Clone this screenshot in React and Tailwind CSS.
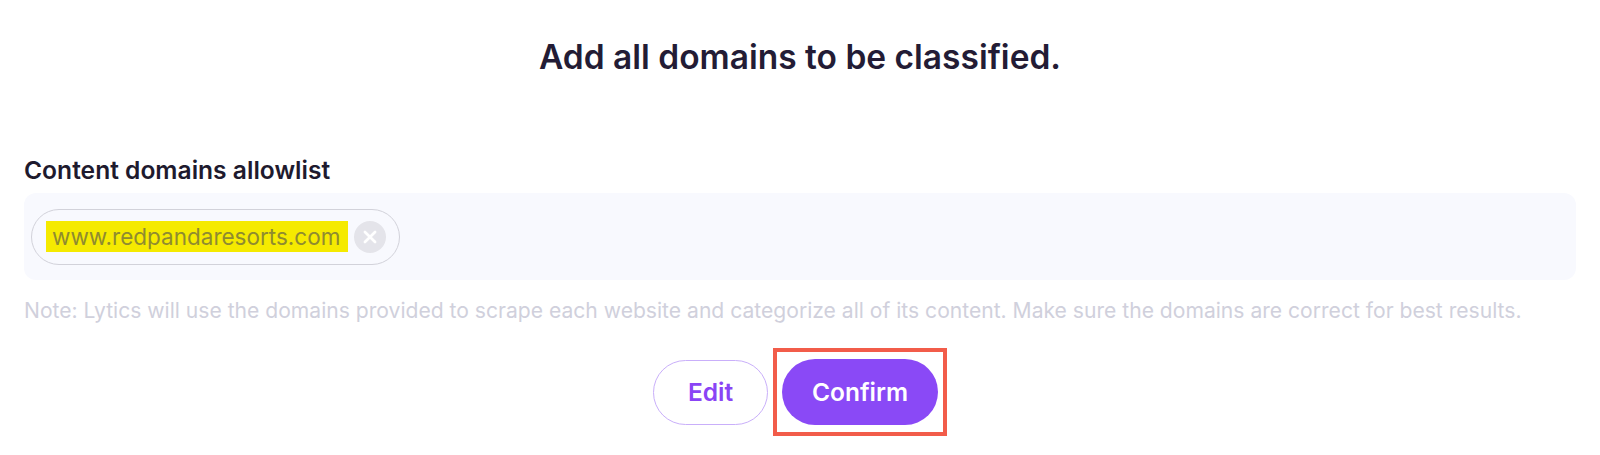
export default function App() {
  return (
    <div className="w-[1600px] h-[455px] bg-white font-['Inter',sans-serif] overflow-hidden">
      <div className="flex flex-col px-6">
        <h1 className="mt-[37px] text-center text-[33.5px] leading-[40px] font-semibold text-[#231c35]">
          Add all domains to be classified.
        </h1>
        <div className="mt-[78px] text-[24.6px] leading-[30px] font-semibold text-[#1e1a2e]">
          Content domains allowlist
        </div>
        <div className="mt-[8px] h-[87px] rounded-xl bg-[#f8f9fe] flex items-center px-[7px]">
          <div className="h-[56px] flex items-center gap-[6px] rounded-full border-[1.5px] border-[#d2d2da] pl-[14px] pr-[13px]">
            <span className="bg-[#f5ea00] pl-[6px] pr-[8px] h-[31px] flex items-center text-[22.5px] text-[#8f8b30]">
              www.redpandaresorts.com
            </span>
            <span className="w-[32px] h-[32px] rounded-full bg-[#e4e4ea] flex items-center justify-center">
              <svg width="18" height="18" viewBox="0 0 16 16" fill="none" stroke="white" strokeWidth="2.4" strokeLinecap="round">
                <path d="M3.5 3.5 L12.5 12.5 M12.5 3.5 L3.5 12.5" />
              </svg>
            </span>
          </div>
        </div>
        <p className="mt-[17px] text-[21.1px] leading-[28px] text-[#d0d0dc] whitespace-nowrap">
          Note: Lytics will use the domains provided to scrape each website and categorize all of its content. Make sure the domains are correct for best results.
        </p>
        <div className="mt-[23px] flex justify-center items-center gap-[5px]">
          <button className="w-[115px] h-[65px] rounded-full border-[1.5px] border-[#c9affa] text-[24.5px] font-semibold text-[#8a44f5]">
            Edit
          </button>
          <div className="border-[4px] border-[#f25c4a] px-[5px] py-[7px]">
            <button className="w-[156px] h-[66px] rounded-full bg-[#8a49f6] text-[24.5px] font-semibold text-white">
              Confirm
            </button>
          </div>
        </div>
      </div>
    </div>
  );
}
